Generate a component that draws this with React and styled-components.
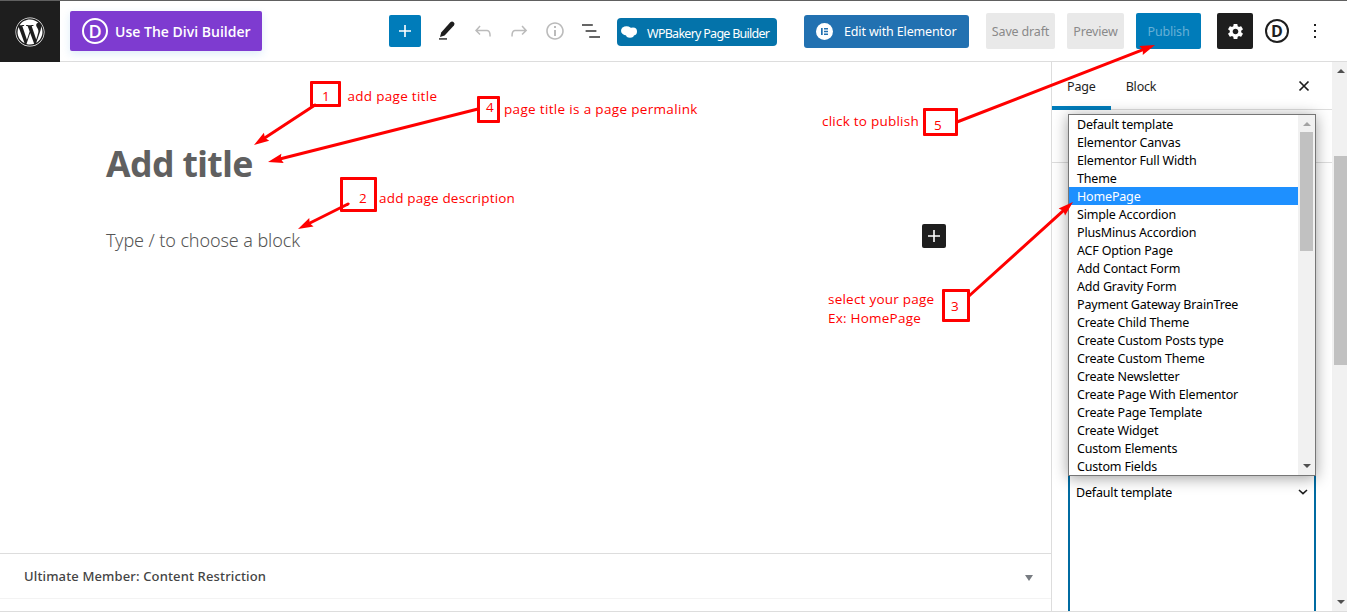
import React from "react";
import styled, { createGlobalStyle, css } from "styled-components";
import { FaWordpress } from "react-icons/fa";
import { MdSettings } from "react-icons/md";

const Global = createGlobalStyle`
  * { box-sizing: border-box; }
  body {
    margin: 0;
    background: #fff;
    overflow: hidden;
    font-family: "Noto Sans", "Open Sans", sans-serif;
    font-size: 12.5px;
    letter-spacing: -0.17px;
    color: #1e1e1e;
  }
  svg { display: block; flex: none; }
`;

/* ---------- page frame ---------- */
const Editor = styled.div`
  position: relative;
  width: 1347px;
  height: 612px;
  display: flex;
  flex-direction: column;
  border-top: 1px solid #606060;
  border-bottom: 1px solid #ddd;
`;
const Header = styled.header`
  display: flex;
  align-items: center;
  height: 61px;
  flex: none;
  border-bottom: 1px solid #ddd;
`;
const Body = styled.div`
  display: flex;
  flex: 1;
  min-height: 0;
`;

/* ---------- header parts ---------- */
const SiteLogo = styled.div`
  width: 60px;
  height: 61px;
  align-self: flex-start;
  display: grid;
  place-items: center;
  background: #1e1e1e;
  color: #fff;
  flex: none;
`;
const Button = styled.button`
  display: flex;
  align-items: center;
  justify-content: center;
  flex: none;
  padding: 0;
  border: 0;
  font: inherit;
  letter-spacing: inherit;
  white-space: nowrap;
  width: ${(p) => p.$width}px;
  height: ${(p) => p.$height || 36}px;
  margin-left: ${(p) => p.$gap || 0}px;
  border-radius: ${(p) => p.$radius || 2}px;
  background: ${(p) => p.$bg || "transparent"};
  color: ${(p) => p.$color || "#fff"};
`;
const DiviButton = styled(Button)`
  justify-content: flex-start;
  padding-left: 12px;
  gap: 7px;
  font: 600 14px "Open Sans", sans-serif;
  letter-spacing: 0.01px;
  box-shadow: 0 3px 9px rgba(43, 135, 218, 0.16);
`;
const PluginButton = styled(Button)`
  justify-content: flex-start;
  padding-left: ${(p) => p.$pad}px;
  gap: ${(p) => p.$space}px;
  letter-spacing: ${(p) => p.$spacing}px;
`;
const BakeryButton = styled(PluginButton)`
  margin-top: 2px;
`;
const Lowered = styled.span`
  padding-top: 3px;
`;
const DiviMark = styled.span`
  display: grid;
  place-items: center;
  width: ${(p) => p.$size}px;
  height: ${(p) => p.$size}px;
  border: 2px solid currentColor;
  border-radius: 50%;
  font: ${(p) => p.$weight || 600} ${(p) => p.$font}px/1 "Open Sans", sans-serif;
  letter-spacing: 0;
`;
const IconButton = styled(Button)`
  color: ${(p) => p.$color || "#1e1e1e"};
`;

/* ---------- canvas ---------- */
const Canvas = styled.main`
  width: 1051px;
  display: flex;
  flex-direction: column;
  flex: none;
`;
const Writing = styled.div`
  flex: 1;
  padding: 77px 105px 0 106px;
`;
const Title = styled.h1`
  margin: 0;
  font-size: 35.5px;
  line-height: 48px;
  font-weight: 700;
  letter-spacing: -0.56px;
  color: #606060;
`;
const BlockRow = styled.div`
  display: flex;
  justify-content: space-between;
  align-items: center;
  height: 24px;
  margin-top: 37px;
`;
const Placeholder = styled.p`
  margin: 8px 0 0;
  font-size: 18px;
  line-height: 24px;
  font-weight: 300;
  letter-spacing: -0.1px;
  color: #555;
`;
const MetaBox = styled.section`
  display: flex;
  align-items: center;
  justify-content: space-between;
  height: 46px;
  margin-bottom: 12px;
  padding: 0 18px 0 24px;
  border-top: 1px solid #ddd;
  border-bottom: 1px solid #f3f3f3;
  font-size: 13px;
  font-weight: 500;
  letter-spacing: 0.14px;
  color: #444;
`;
const Toggle = styled.span`
  padding-top: 3px;
`;

/* ---------- sidebar ---------- */
const Sidebar = styled.aside`
  position: relative;
  width: 281px;
  flex: none;
  display: flex;
  flex-direction: column;
  border-left: 1px solid #ddd;
`;
const Tabs = styled.div`
  display: flex;
  height: 48px;
  flex: none;
  border-bottom: 1px solid #ddd;
`;
const Tab = styled.div`
  display: flex;
  align-items: center;
  height: 48px;
  padding: 1px 15px 0;
  font-weight: 400;
  ${(p) => p.$active && css`box-shadow: inset 0 -4px #007cba;`}
`;
const CloseButton = styled(Button)`
  margin: 12px 16px 0 auto;
`;
const Summary = styled.div`
  height: 53px;
  flex: none;
  border-bottom: 1px solid #ddd;
`;
const Attributes = styled.div`
  flex: 1;
  display: flex;
  padding: 297px 16px 0;
`;
const Select = styled.div`
  flex: 1;
  display: flex;
  justify-content: space-between;
  padding: 22px 6px 0 6px;
  border: solid #006ba1;
  border-width: 0 2px;
  color: #000;
`;
const SelectValue = styled.span`
  height: 18px;
  line-height: 22px;
  overflow: hidden;
`;
const Menu = styled.div`
  position: absolute;
  top: 52px;
  left: 16px;
  width: 248px;
  height: 362px;
  display: flex;
  border: 1px solid #767676;
  background: #fff;
  box-shadow: 0 2px 14px rgba(0, 0, 0, 0.38);
`;
const Options = styled.ul`
  flex: 1;
  margin: 0;
  padding: 0;
  list-style: none;
`;
const Option = styled.li`
  height: 18px;
  line-height: 20px;
  padding-left: 8px;
  color: ${(p) => (p.$selected ? "#fff" : "#000")};
  background: ${(p) => (p.$selected ? "#1e90ff" : "transparent")};
`;
const Scrollbar = styled.div`
  display: flex;
  flex-direction: column;
  align-items: center;
  justify-content: space-between;
  width: ${(p) => p.$width}px;
  flex: none;
  padding: ${(p) => p.$pad};
  background:
    linear-gradient(#c1c1c1, #c1c1c1) 2px ${(p) => p.$top}px / 13px ${(p) => p.$length}px no-repeat,
    #f1f1f1;
`;

/* ---------- annotations ---------- */
const Overlay = styled.div`
  position: absolute;
  inset: -1px 0 0;
  pointer-events: none;
`;
const Note = styled.span`
  position: absolute;
  left: ${(p) => p.$x}px;
  top: ${(p) => p.$y}px;
  font: 13.5px/19px "Open Sans", sans-serif;
  letter-spacing: ${(p) => p.$ls ?? 0.31}px;
  white-space: pre;
  color: #f00;
`;
const Step = styled.span`
  position: absolute;
  left: ${(p) => p.$x}px;
  top: ${(p) => p.$y}px;
  width: ${(p) => p.$w}px;
  height: ${(p) => p.$h}px;
  border: 3px solid #f00;
  border-radius: 1px;
`;

const Plus = () => (
  <svg width="24" height="24" viewBox="0 0 24 24" fill="currentColor">
    <path d="M18 11.2h-5.2V6h-1.6v5.2H6v1.6h5.2V18h1.6v-5.2H18z" />
  </svg>
);
const Glyph = ({ d }) => (
  <svg width="24" height="24" viewBox="0 0 24 24" fill="currentColor">
    <path d={d} />
  </svg>
);
const Triangle = ({ up, color = "#505050", w = 8, h = 4 }) => (
  <svg width={w} height={h} viewBox="0 0 8 4" preserveAspectRatio="none" fill={color}>
    <path d={up ? "M0 4h8L4 0z" : "M0 0h8L4 4z"} />
  </svg>
);

const UNDO =
  "M18.3 11.7c-.6-.6-1.4-.9-2.3-.9H6.7l2.9-3.3-1.1-1-4.5 5L8.5 16l1-1-2.7-2.7H16c.5 0 .9.2 1.3.5 1 1 1 3.4 1 4.5v.3h1.5v-.2c0-1.5 0-4.3-1.5-5.7z";
const REDO =
  "M15.6 6.5l-1.1 1 2.9 3.3H8c-.9 0-1.7.3-2.3.9-1.4 1.5-1.4 4.2-1.4 5.6v.2h1.5v-.3c0-1.1 0-3.5 1-4.5.3-.3.7-.5 1.3-.5h9.2L14.5 15l1.1 1.1 4.6-4.6-4.6-5z";
const INFO =
  "M12 3.2c-4.8 0-8.8 3.9-8.8 8.8 0 4.8 3.9 8.8 8.8 8.8 4.8 0 8.8-3.9 8.8-8.8 0-4.8-4-8.8-8.8-8.8zm0 16c-4 0-7.2-3.3-7.2-7.2C4.8 8 8 4.8 12 4.8s7.2 3.3 7.2 7.2c0 4-3.2 7.2-7.2 7.2zM11 17h2v-6h-2v6zm0-8h2V7h-2v2z";
const LIST =
  "M13.8 5.2H3v1.5h10.8V5.2zm-3.6 12v1.5H21v-1.5H10.2zm7.2-6H6.6v1.5h10.8v-1.5z";

const templates = [
  "Default template", "Elementor Canvas", "Elementor Full Width", "Theme", "HomePage",
  "Simple Accordion", "PlusMinus Accordion", "ACF Option Page", "Add Contact Form",
  "Add Gravity Form", "Payment Gateway BrainTree", "Create Child Theme",
  "Create Custom Posts type", "Create Custom Theme", "Create Newsletter",
  "Create Page With Elementor", "Create Page Template", "Create Widget",
  "Custom Elements", "Custom Fields",
];

const steps = [
  { n: 1, x: 310, y: 81, w: 31, h: 26, nx: 322, ny: 87 },
  { n: 4, x: 477, y: 96, w: 23, h: 27, nx: 486, ny: 98 },
  { n: 2, x: 340, y: 177, w: 37, h: 35, nx: 359, ny: 189 },
  { n: 5, x: 923, y: 108, w: 35, h: 28, nx: 934, ny: 116 },
  { n: 3, x: 942, y: 289, w: 28, h: 33, nx: 951, ny: 297 },
];
const notes = [
  { x: 347.5, y: 87, text: "add page title", ls: 0.29 },
  { x: 504, y: 100, text: "page title is a page permalink", ls: 0.33 },
  { x: 379, y: 189, text: "add page description", ls: 0.19 },
  { x: 822, y: 112, text: "click to publish", ls: 0.24 },
  { x: 828, y: 290, text: "select your page\nEx: HomePage", ls: 0.23 },
];
const arrows = [
  [315, 105, 254, 145],
  [478, 109, 268, 162],
  [348, 204, 298, 229],
  [957, 122, 1155, 45],
  [969, 296, 1073, 202],
];

function Arrow({ from: [x1, y1, x2, y2] }) {
  const len = Math.hypot(x2 - x1, y2 - y1);
  const ux = (x2 - x1) / len;
  const uy = (y2 - y1) / len;
  const bx = x2 - ux * 15;
  const by = y2 - uy * 15;
  return (
    <g>
      <line x1={x1} y1={y1} x2={x2 - ux * 10} y2={y2 - uy * 10} stroke="#f00" strokeWidth="3" strokeLinecap="round" />
      <polygon
        fill="#f00"
        points={`${x2},${y2} ${bx - uy * 4.8},${by + ux * 4.8} ${x2 - ux * 13},${y2 - uy * 13} ${bx + uy * 4.8},${by - ux * 4.8}`}
      />
    </g>
  );
}

export default function App() {
  return (
    <>
      <Global />
      <Editor>
        <Header>
          <SiteLogo><FaWordpress size={30} /></SiteLogo>
          <DiviButton $width={192} $height={40} $gap={10} $bg="#7e3bd0">
            <DiviMark $size={26} $font={18}>D</DiviMark>
            Use The Divi Builder
          </DiviButton>
          <Button $width={32} $height={32} $gap={127} $bg="#007cba"><Plus /></Button>
          <IconButton $width={24} $height={24} $gap={14}>
            <svg width="24" height="24" viewBox="0 0 24 24" fill="#1e1e1e">
              <path d="M5 18l1.200-4.400L15.300 3.300Q17 1.700 18.700 3.200 20.400 4.700 18.900 6.400L9.600 16.400z" />
              <path d="M4 19h8v1.800H4z" fill="#555" />
            </svg>
          </IconButton>
          <IconButton $width={24} $height={24} $gap={12} $color="#bbb"><Glyph d={UNDO} /></IconButton>
          <IconButton $width={24} $height={24} $gap={12} $color="#bbb"><Glyph d={REDO} /></IconButton>
          <IconButton $width={24} $height={24} $gap={12} $color="#bbb"><Glyph d={INFO} /></IconButton>
          <IconButton $width={24} $height={24} $gap={12} $color="#333"><Glyph d={LIST} /></IconButton>
          <BakeryButton $width={160} $height={28} $gap={14} $radius={4} $bg="#0473aa" $pad={4} $space={10} $spacing={-0.73}>
            <svg width="16" height="12" viewBox="0 0 16 12" fill="#fff">
              <ellipse cx="5.500" cy="4.800" rx="5.500" ry="4.600" />
              <circle cx="12" cy="5.500" r="4" />
              <ellipse cx="9" cy="8.500" rx="4" ry="3.200" />
            </svg>
            <Lowered>WPBakery Page Builder</Lowered>
          </BakeryButton>
          <PluginButton $width={165} $height={33} $gap={27} $radius={3} $bg="#2271b1" $pad={12} $space={11} $spacing={-0.14}>
            <svg width="17" height="17" viewBox="0 0 17 17">
              <circle cx="8.500" cy="8.500" r="8.500" fill="#fff" />
              <path d="M5 5h1.700v7H5zM8 5h4v1.400H8zM8 7.800h4v1.400H8zM8 10.600h4V12H8z" fill="#2271b1" />
            </svg>
            <span>Edit with Elementor</span>
          </PluginButton>
          <Button $width={69} $gap={17} $bg="#e9e9e9" $color="#8a8a8a">Save draft</Button>
          <Button $width={57} $gap={12} $bg="#e9e9e9" $color="#8a8a8a">Preview</Button>
          <Button $width={65} $gap={12} $bg="#007cba" $color="#66b0d6">Publish</Button>
          <Button $width={36} $gap={16} $bg="#1e1e1e"><MdSettings size={19} /></Button>
          <IconButton $width={24} $height={24} $gap={12}><DiviMark $size={24} $font={16} $weight={700}>D</DiviMark></IconButton>
          <IconButton $width={24} $height={24} $gap={14}>
            <Glyph d="M11 5h2v2h-2zM11 11h2v2h-2zM11 17h2v2h-2z" />
          </IconButton>
        </Header>

        <Body>
          <Canvas>
            <Writing>
              <Title>Add title</Title>
              <BlockRow>
                <Placeholder>Type / to choose a block</Placeholder>
                <Button $width={24} $height={24} $bg="#1e1e1e"><Plus /></Button>
              </BlockRow>
            </Writing>
            <MetaBox>
              Ultimate Member: Content Restriction
              <Toggle><Triangle color="#787c82" h={6} /></Toggle>
            </MetaBox>
          </Canvas>

          <Sidebar>
            <Tabs>
              <Tab $active>Page</Tab>
              <Tab>Block</Tab>
              <CloseButton $width={24} $height={24} $color="#1e1e1e">
                <svg width="24" height="24" viewBox="0 0 24 24" fill="none" stroke="currentColor" strokeWidth="1.700">
                  <path d="M7.500 7.500l9 9M16.500 7.500l-9 9" />
                </svg>
              </CloseButton>
            </Tabs>
            <Summary />
            <Attributes>
              <Select>
                <SelectValue>Default template</SelectValue>
                <svg width="10" height="18" viewBox="0 0 10 18" fill="none" stroke="#1e1e1e" strokeWidth="1.600">
                  <path d="M1 8l4 3.600 4-3.600" />
                </svg>
              </Select>
            </Attributes>
            <Menu>
              <Options>
                {templates.map((name) => (
                  <Option key={name} $selected={name === "HomePage"}>{name}</Option>
                ))}
              </Options>
              <Scrollbar $width={17} $pad="7px 0" $top={17} $length={119}>
                <Triangle up color="#a3a3a3" />
                <Triangle />
              </Scrollbar>
            </Menu>
          </Sidebar>

          <Scrollbar $width={15} $pad="7px 0 7px 2px" $top={94} $length={209}>
            <Triangle up />
            <Triangle />
          </Scrollbar>
        </Body>

        <Overlay>
          <svg width="1347" height="612" viewBox="0 0 1347 612">
            {arrows.map((a) => <Arrow key={a.join()} from={a} />)}
          </svg>
          {steps.map((s) => (
            <React.Fragment key={s.n}>
              <Step $x={s.x} $y={s.y} $w={s.w} $h={s.h} />
              <Note $x={s.nx} $y={s.ny}>{s.n}</Note>
            </React.Fragment>
          ))}
          {notes.map((n) => <Note key={n.text} $x={n.x} $y={n.y} $ls={n.ls}>{n.text}</Note>)}
        </Overlay>
      </Editor>
    </>
  );
}
